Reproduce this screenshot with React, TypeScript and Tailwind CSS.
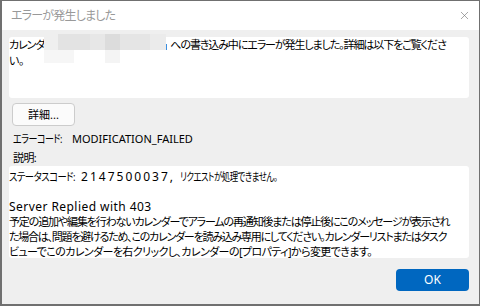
import { X } from 'lucide-react';

const font = "font-['Noto_Sans','Noto_Sans_CJK_JP',sans-serif] [font-feature-settings:'palt']";

// blurred-out calendar name (top band / bottom band pieces)
const blurTop = [
  { w: 14, c: 'bg-[#efefef]' },
  { w: 32, c: 'bg-[#e3e3e3]' },
  { w: 15, c: 'bg-[#e7e7e7]' },
  { w: 15, c: 'bg-[#dcdcdc]' },
  { w: 30, c: 'bg-[#e5e5e5]' },
  { w: 16, c: 'bg-[#ebebeb]' },
];
const blurBottom = [
  { w: 30, c: 'bg-[#f6f6f6]' },
  { w: 31, c: 'bg-white' },
  { w: 15, c: 'bg-[#f4f4f4]' },
  { w: 46, c: 'bg-white' },
];

export default function App() {
  return (
    <div className={`w-[480px] h-[306px] bg-[#efefef] border-t border-r border-l-2 border-b-2 border-[#707070] flex flex-col text-[11px] tracking-[-0.6px] text-black ${font}`}>
      <div className="h-[29px] bg-white flex items-center justify-between pl-[9px] pr-[8px] shrink-0">
        <span className="text-[12px] tracking-[-0.8px] text-[#999999]">エラーが発生しました</span>
        <X className="w-[13px] h-[13px] text-[#777777]" strokeWidth={1.2} />
      </div>

      <div className="relative flex flex-col flex-1 pl-[7px]">
        <div className="mt-[7px] w-[460px] h-[61px] bg-white rounded-[3px] leading-[16px] whitespace-nowrap">
          <div className="tracking-[-1.1px]">
            カレンダ<span className="inline-block w-[126px]" />への書き込み中にエラーが発生しました。詳細は以下をご覧くださ
          </div>
          <div>い。</div>
        </div>

        <div className="absolute left-[42px] top-[4px] flex flex-col">
          <div className="flex h-[16px]">
            {blurTop.map((b, i) => (
              <div key={i} className={b.c} style={{ width: b.w }} />
            ))}
          </div>
          <div className="flex h-[13px]">
            {blurBottom.map((b, i) => (
              <div key={i} className={b.c} style={{ width: b.w }} />
            ))}
          </div>
        </div>
        <div className="absolute left-[164px] top-[14px] w-[1px] h-[6px] bg-[#3b8fe0]" />

        <button className="mt-[5px] ml-[3px] w-[63px] h-[23px] rounded-[4px] border border-[#cccccc] bg-[#fbfbfb] text-[11px] tracking-normal leading-none">
          詳細...
        </button>

        <div className="mt-[5px] ml-[4px] leading-[15px] flex whitespace-nowrap">
          <span className="w-[59px] shrink-0">
            <span className="inline-block origin-left scale-x-[0.82]">エラーコード:</span>
          </span>
          <span className="tracking-normal">MODIFICATION_FAILED</span>
        </div>
        <div className="mt-[4px] ml-[4px] leading-[15px]">説明:</div>

        <div className="mt-[1px] w-[460px] h-[92px] bg-white rounded-[3px] leading-[15px] pt-[3px] whitespace-nowrap">
          <div>
            <span className="inline-block w-[67px]">
              <span className="inline-block origin-left scale-x-[0.85]">ステータスコード:</span>
            </span>
            <span className="text-[12px] tracking-[2px]"> 2147500037, </span>
            <span className="inline-block origin-left scale-x-[0.76]">リクエストが処理できません。</span>
          </div>
          <div className="h-[15px]" />
          <div>
            <span className="text-[12px] tracking-[0.45px]">Server Replied with 403</span>
          </div>
          <div className="tracking-[-1.15px]">予定の追加や編集を行わないカレンダーでアラームの再通知後または停止後にこのメッセージが表示され</div>
          <div className="tracking-[-1.23px]">た場合は、問題を避けるため、このカレンダーを読み込み専用にしてください。カレンダーリストまたはタスク</div>
          <div>ビューでこのカレンダーを右クリックし、カレンダーの[プロパティ]から変更できます。</div>
        </div>

        <div className="flex justify-end mt-[11px] w-[460px]">
          <button className="w-[73px] h-[22px] rounded-[4px] bg-[#0067c0] text-white text-[12px] tracking-normal leading-none">
            OK
          </button>
        </div>
      </div>
    </div>
  );
}
